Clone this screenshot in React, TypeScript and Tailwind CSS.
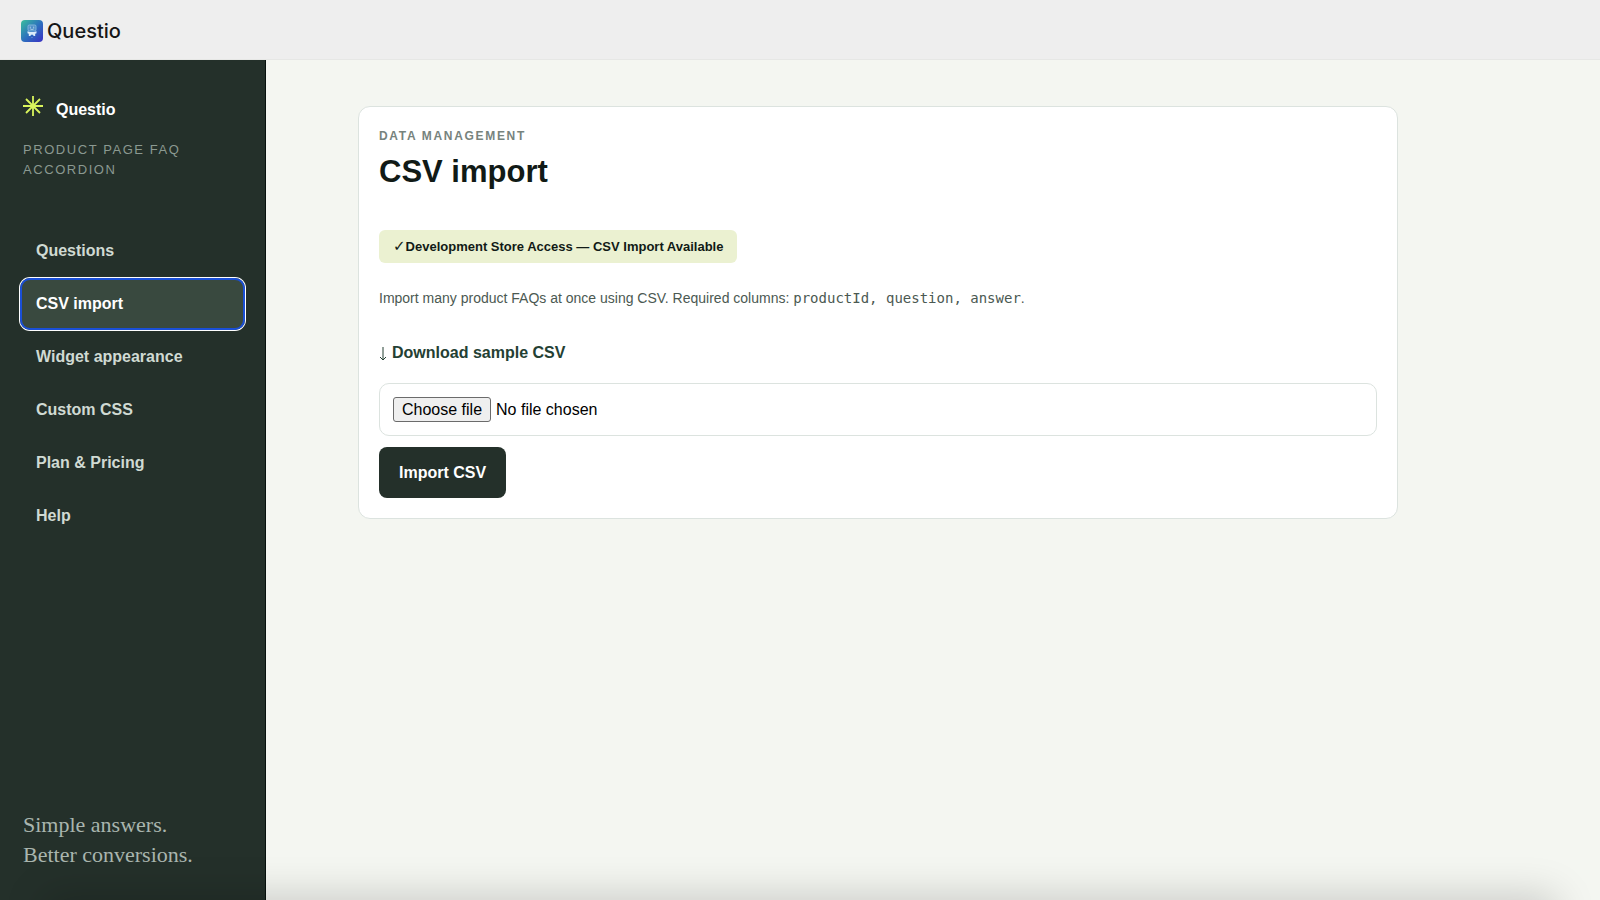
import { useState } from "react";

const navItems = ["Questions", "CSV import", "Widget appearance", "Custom CSS", "Plan & Pricing", "Help"];

function AppIcon() {
  return (
    <svg className="size-[22px]" viewBox="0 0 22 22" aria-hidden="true">
      <defs>
        <linearGradient id="app-icon" x1="0" y1="0" x2="1" y2="1">
          <stop offset="0" stopColor="#3bbf9c" />
          <stop offset="0.5" stopColor="#2c72bd" />
          <stop offset="1" stopColor="#3a2fc4" />
        </linearGradient>
      </defs>
      <rect width="22" height="22" rx="4" fill="url(#app-icon)" />
      <rect x="7" y="5" width="8" height="6" rx="1.2" fill="#4f8fc8" stroke="#8fc0e2" strokeWidth="0.8" />
      <path d="M9.3 6.6v2M12.7 6.6v2M9.5 9.4h3" stroke="#b9d9ee" strokeWidth="0.8" />
      <path d="M6.5 11.3 9 12h4l2.5-.7v2l-1.3.5v2.2h-1.6l-.6-1.2h-2l-.6 1.2H7.8v-2.2l-1.3-.5z" fill="#dcecfa" />
      <path d="M11 17v1" stroke="#8fa5e8" strokeWidth="0.8" />
    </svg>
  );
}

function Spark() {
  return (
    <svg className="size-5" viewBox="0 0 20 20" stroke="#d9f45c" strokeWidth="1.8" aria-hidden="true">
      <path d="M10 0v20M0 10h20M3 3l14 14M17 3 3 17" />
    </svg>
  );
}

function Sidebar() {
  const [active, setActive] = useState("CSV import");

  return (
    <aside className="flex w-[266px] shrink-0 flex-col border-r border-[#07110d] bg-[#24302a] px-5">
      <div className="flex items-start gap-3 pl-[3px] pt-9">
        <Spark />
        <span className="pl-px pt-0.5 text-base leading-6 font-bold text-white">Questio</span>
      </div>
      <p className="mt-[18px] pl-[3px] text-[13px] leading-5 tracking-[0.12em] text-[#8b9991] uppercase">
        Product page FAQ accordion
      </p>
      <nav className="mt-[45px] flex flex-col gap-px">
        {navItems.map((item) => (
          <a
            key={item}
            href="#"
            onClick={() => setActive(item)}
            aria-current={item === active ? "page" : undefined}
            className={
              item === active
                ? "rounded-[10px] bg-[#39493f] px-4 py-3.5 text-base leading-6 font-bold text-white ring-1 ring-white inset-ring-2 inset-ring-[#1a4fd6]"
                : "rounded-[10px] px-4 py-3.5 text-base leading-6 font-bold text-[#d0dad3]"
            }
          >
            {item}
          </a>
        ))}
      </nav>
      <p className="mt-auto pb-[30px] pl-[3px] font-['Liberation_Serif',serif] text-[22px] leading-[30px] text-[#a9b5ae]">
        Simple answers.
        <br />
        Better conversions.
      </p>
    </aside>
  );
}

function ImportCard() {
  const [fileName, setFileName] = useState("No file chosen");

  return (
    <section className="max-w-[1040px] rounded-xl border border-[#dce3df] bg-white p-5 pt-[19px]">
      <p className="text-xs leading-5 font-bold tracking-[0.14em] text-[#77837d] uppercase">Data management</p>
      <h1 className="mt-1 text-[31px] leading-[44px] font-bold text-[#111a16]">CSV import</h1>
      <div className="mt-9 inline-flex h-[33px] items-center rounded-md bg-[#ebf1d1] px-3.5 text-[13px] font-bold text-[#111a16]">
        <span className="font-['DejaVu_Sans',sans-serif] text-[15px]">✓</span>
        <span>Development Store Access — CSV Import Available</span>
      </div>
      <p className="mt-[23px] text-sm leading-6 text-[#4b5952]">
        Import many product FAQs at once using CSV. Required columns:{" "}
        <code className="font-['DejaVu_Sans_Mono',monospace]">productId, question, answer</code>.
      </p>
      <a href="#" className="mt-[31px] flex w-fit items-center gap-[5px] text-base leading-6 font-bold text-[#244033]">
        <svg className="h-4 w-2" viewBox="0 0 8 16" fill="none" stroke="currentColor" aria-hidden="true">
          <path d="M4 2v13M1 12l3 3 3-3" />
        </svg>
        Download sample CSV
      </a>
      <form onSubmit={(e) => e.preventDefault()}>
        <label className="mt-[18px] flex h-[53px] items-center gap-[5px] rounded-[10px] border border-[#dce3df] px-[13px] text-base text-black">
          <input
            type="file"
            accept=".csv"
            className="sr-only"
            onChange={(e) => setFileName(e.target.files?.[0]?.name ?? "No file chosen")}
          />
          <span className="rounded-[3px] border border-[#6b6b6b] bg-[#efefef] px-2 leading-[23px]">Choose file</span>
          <span>{fileName}</span>
        </label>
        <button type="submit" className="mt-[11px] h-[51px] rounded-lg bg-[#24302a] px-5 text-base font-bold text-white">
          Import CSV
        </button>
      </form>
    </section>
  );
}

export default function App() {
  return (
    <div className="relative flex min-h-screen flex-col bg-[#f4f6f1] font-['Liberation_Sans',Arial,sans-serif]">
      <header className="flex h-[60px] items-center gap-1 border-b border-[#e6e7e5] bg-[#eeeeee] px-[21px] pt-0.5">
        <AppIcon />
        <span className="font-[Inter,sans-serif] text-xl font-medium text-[#161616]">Questio</span>
      </header>
      <div className="flex flex-1">
        <Sidebar />
        <main className="min-w-0 flex-1 pt-[46px] pr-[200px] pl-[92px]">
          <ImportCard />
        </main>
      </div>
      {/* Soft shadow along the bottom edge */}
      <div className="pointer-events-none absolute inset-x-0 bottom-0 h-16 overflow-hidden">
        <div className="absolute inset-x-12 top-full h-10 shadow-[0_0_40px_4px_rgba(0,0,0,0.18)]" />
      </div>
    </div>
  );
}
